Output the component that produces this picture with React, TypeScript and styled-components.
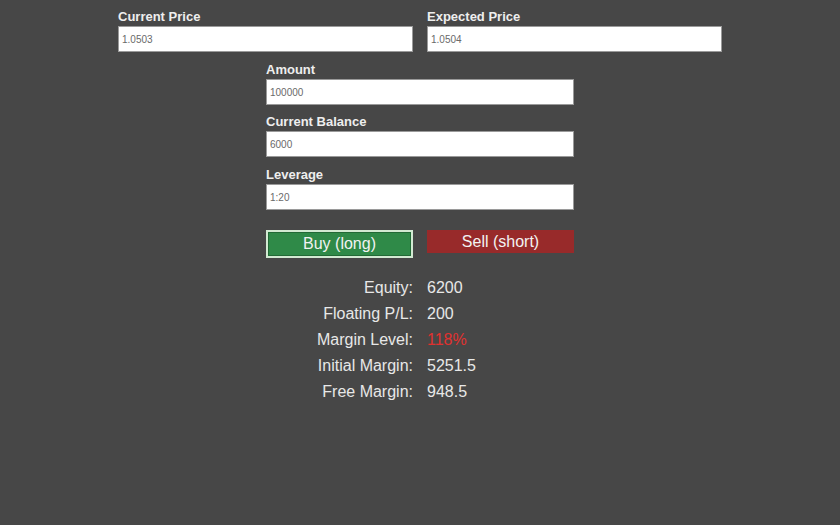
import { Fragment } from "react";
import styled, { createGlobalStyle } from "styled-components";

const GlobalStyle = createGlobalStyle`
  html, body {
    margin: 0;
    background: #474747;
    font-family: "Liberation Sans", Arial, sans-serif;
  }
`;

const Page = styled.div`
  display: flex;
  flex-direction: column;
  align-items: center;
  padding-top: 8px;
`;

const Row = styled.div`
  display: flex;
  gap: 14px;
  width: 604px;
`;

const Column = styled.div`
  display: flex;
  flex-direction: column;
  width: 308px;
`;

const Field = styled.div<{ $space?: number }>`
  display: flex;
  flex-direction: column;
  flex: 1;
  margin-bottom: ${(p) => p.$space ?? 9}px;
`;

const Label = styled.label`
  font-weight: bold;
  font-size: 13px;
  line-height: 18px;
  color: #eeeeee;
`;

const Input = styled.input`
  box-sizing: border-box;
  height: 26px;
  padding: 0 3px;
  font-family: "Liberation Sans", Arial, sans-serif;
  font-size: 10px;
  color: #6a6a6a;
  background: #fff;
  border: 1px solid #9a9a9a;
  outline: none;
`;

const Buttons = styled.div`
  display: flex;
  gap: 14px;
  margin-top: 11px;
  align-items: flex-start;
`;

const Button = styled.button<{ $kind: "buy" | "sell" }>`
  box-sizing: border-box;
  width: 147px;
  font-family: "Liberation Sans", Arial, sans-serif;
  font-size: 16px;
  color: #f2f2f2;
  cursor: pointer;
  background: ${(p) => (p.$kind === "buy" ? "#2f8a48" : "#982a2a")};
  border: ${(p) => (p.$kind === "buy" ? "2px solid #d2ead2" : "none")};
  box-shadow: ${(p) => (p.$kind === "buy" ? "inset 0 0 0 1px #216a35" : "none")};
  height: ${(p) => (p.$kind === "buy" ? 28 : 23)}px;
  padding: 0;
`;

const Stats = styled.div`
  display: grid;
  grid-template-columns: 147px 147px;
  column-gap: 14px;
  margin-top: 17px;
  font-size: 16px;
  line-height: 26px;
  color: #e8e8e8;
`;

const StatLabel = styled.div`
  text-align: right;
`;

const StatValue = styled.div<{ $alert?: boolean }>`
  color: ${(p) => (p.$alert ? "#e0312f" : "#e8e8e8")};
`;

const stats = [
  { label: "Equity:", value: "6200" },
  { label: "Floating P/L:", value: "200" },
  { label: "Margin Level:", value: "118%", alert: true },
  { label: "Initial Margin:", value: "5251.5" },
  { label: "Free Margin:", value: "948.5" },
];

const App = () => {
  return (
    <>
      <GlobalStyle />
      <Page>
        <Row>
          <Field>
            <Label>Current Price</Label>
            <Input defaultValue="1.0503" />
          </Field>
          <Field>
            <Label>Expected Price</Label>
            <Input defaultValue="1.0504" />
          </Field>
        </Row>
        <Column>
          <Field $space={8}>
            <Label>Amount</Label>
            <Input defaultValue="100000" />
          </Field>
          <Field $space={9}>
            <Label>Current Balance</Label>
            <Input defaultValue="6000" />
          </Field>
          <Field $space={9}>
            <Label>Leverage</Label>
            <Input defaultValue="1:20" />
          </Field>
          <Buttons>
            <Button $kind="buy">Buy (long)</Button>
            <Button $kind="sell">Sell (short)</Button>
          </Buttons>
        </Column>
        <Stats>
          {stats.map((s) => (
            <Fragment key={s.label}>
              <StatLabel>{s.label}</StatLabel>
              <StatValue $alert={s.alert}>{s.value}</StatValue>
            </Fragment>
          ))}
        </Stats>
      </Page>
    </>
  );
};

export default App;
